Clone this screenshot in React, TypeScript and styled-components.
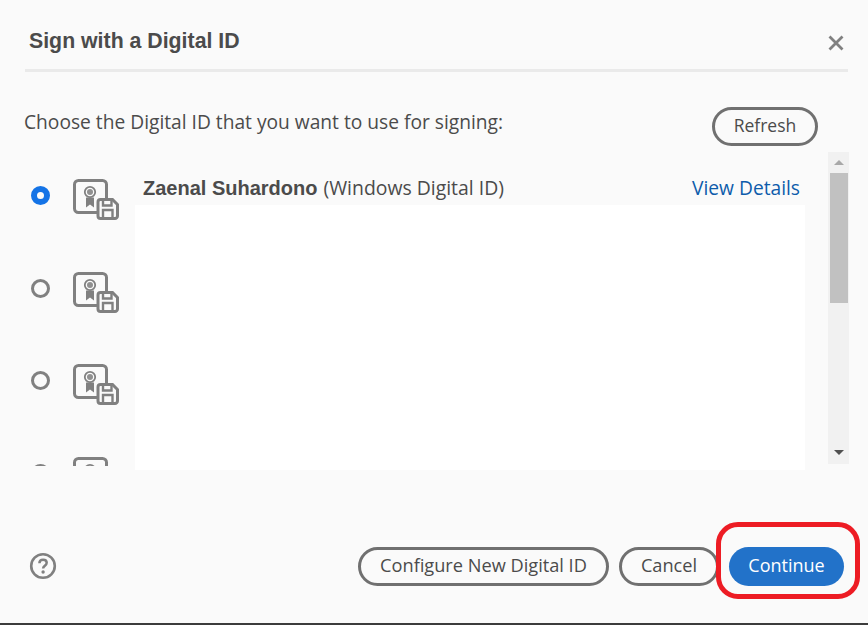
import React from 'react';
import styled, { createGlobalStyle } from 'styled-components';

const ids = [true, false, false, false];

const GlobalStyle = createGlobalStyle`
  html, body {
    margin: 0;
    padding: 0;
    background: #fafafa;
  }
`;

const CertIcon = () => (
  <svg width="46" height="41" viewBox="0 0 46 41" fill="none">
    <rect x="1.5" y="1.5" width="32" height="32" rx="4" stroke="#808080" strokeWidth="3" />
    <circle cx="17" cy="13" r="5.2" stroke="#808080" strokeWidth="1.8" />
    <circle cx="17" cy="13" r="3" fill="#909090" />
    <path d="M13 18.5v10l4-3 4 3v-10z" fill="#808080" />
    <path
      d="M27.5 20.5h12l5 5v11.5a2.5 2.5 0 0 1-2.5 2.5H27.5A2.5 2.5 0 0 1 25 37V23a2.5 2.5 0 0 1 2.5-2.5z"
      fill="#fafafa"
      stroke="#808080"
      strokeWidth="3"
    />
    <path d="M30 21v5.5h8.500V21" stroke="#808080" strokeWidth="2.4" />
    <path d="M30 39v-8h9.500v8" stroke="#808080" strokeWidth="2.4" />
  </svg>
);

export default function App() {
  return (
    <Page>
      <GlobalStyle />
      <Header>
        <Title>Sign with a Digital ID</Title>
        <CloseIcon width="16" height="16" viewBox="0 0 16 16">
          <path d="M1.5 1.5l13 13M14.5 1.5l-13 13" stroke="#808080" strokeWidth="2.8" />
        </CloseIcon>
      </Header>
      <Intro>
        <IntroText>Choose the Digital ID that you want to use for signing:</IntroText>
        <PillButton $width={106} $fontSize={17.5}>Refresh</PillButton>
      </Intro>
      <ListArea>
        <IdList>
          {ids.map((selected, i) => (
            <IdRow key={i}>
              <Radio $selected={selected} />
              <CertIcon />
              {selected && (
                <IdInfo>
                  <IdName>Zaenal Suhardono</IdName>
                  <IdType>(Windows Digital ID)</IdType>
                  <ViewDetails>View Details</ViewDetails>
                </IdInfo>
              )}
            </IdRow>
          ))}
        </IdList>
        <Redaction />
        <Scrollbar>
          <ArrowUp />
          <Thumb />
          <ArrowDown />
        </Scrollbar>
      </ListArea>
      <Footer>
        <HelpIcon width="28" height="28" viewBox="0 0 28 28" fill="none">
          <circle cx="14" cy="14" r="11.8" stroke="#808080" strokeWidth="2.6" />
          <path
            d="M10.4 11.2c0-2.2 1.6-3.5 3.7-3.5s3.6 1.3 3.6 3.1c0 2.9-3.6 3-3.6 5.8"
            stroke="#808080"
            strokeWidth="2.5"
          />
          <circle cx="14.1" cy="20" r="1.7" fill="#808080" />
        </HelpIcon>
        <FooterButtons>
          <PillButton $width={251} $fontSize={18.2}>Configure New Digital ID</PillButton>
          <PillButton $width={100} $fontSize={18.2}>Cancel</PillButton>
          <PrimaryButton>Continue</PrimaryButton>
        </FooterButtons>
        <Annotation />
      </Footer>
      <BottomEdge />
    </Page>
  );
}

const Page = styled.div`
  width: 868px;
  height: 625px;
  box-sizing: border-box;
  display: flex;
  flex-flow: column;
  position: relative;
  overflow: hidden;
  background: #fafafa;
  font-family: 'Open Sans', 'Noto Sans', sans-serif;
  color: #4b4b4b;
`;

const Header = styled.div`
  height: 72px;
  box-sizing: border-box;
  margin: 0 20px 0 25px;
  padding: 26px 4px 0 4px;
  display: flex;
  justify-content: space-between;
  align-items: flex-start;
  border-bottom: 3px solid #eaeaea;
  flex: none;
`;

const Title = styled.h1`
  margin: 0;
  font-family: 'Liberation Sans', Arial, sans-serif;
  font-size: 21.3px;
  line-height: 30px;
  font-weight: bold;
  color: #4b4b4b;
`;

const CloseIcon = styled.svg`
  margin-top: 9px;
`;

const Intro = styled.div`
  height: 39px;
  margin: 35px 50px 0 24px;
  display: flex;
  justify-content: space-between;
  align-items: center;
  flex: none;
`;

const IntroText = styled.div`
  font-size: 19.2px;
  line-height: 30px;
  margin-top: -9px;
`;

const PillButton = styled.button<{ $width: number; $fontSize: number }>`
  width: ${props => props.$width}px;
  height: 39px;
  box-sizing: border-box;
  padding: 0 0 3px;
  flex: none;
  border: 3px solid #707070;
  border-radius: 20px;
  background: transparent;
  font-family: inherit;
  font-size: ${props => props.$fontSize}px;
  color: #4b4b4b;
`;

const ListArea = styled.div`
  height: 312px;
  margin: 6px 19px 0 0;
  display: flex;
  flex: none;
  position: relative;
`;

const IdList = styled.div`
  flex: 1;
  overflow: hidden;
  padding: 27px 0 0 31px;
  margin-bottom: -2px;
  display: flex;
  flex-flow: column;
  gap: 51.5px;
`;

const IdRow = styled.div`
  height: 41px;
  flex: none;
  display: flex;
  align-items: center;
  gap: 15px;
`;

const Radio = styled.span<{ $selected: boolean }>`
  width: 19px;
  height: 19px;
  flex: none;
  box-sizing: border-box;
  border-radius: 50%;
  background: #fafafa;
  border: ${props => (props.$selected ? '6px solid #1473e6' : '3px solid #808080')};
  margin-bottom: 8px;
  margin-right: 8px;
`;

const IdInfo = styled.div`
  width: 657px;
  margin: -24px 0 0 9px;
  display: flex;
  align-items: baseline;
`;

const IdName = styled.span`
  font-family: 'Liberation Sans', Arial, sans-serif;
  font-size: 20px;
  font-weight: bold;
`;

const IdType = styled.span`
  font-size: 19.4px;
  margin-left: 6px;
`;

const ViewDetails = styled.span`
  margin-left: auto;
  font-size: 19.2px;
  color: #0d5cab;
`;

// blanked-out region of the original capture
const Redaction = styled.div`
  position: absolute;
  left: 135px;
  top: 53px;
  width: 670px;
  height: 265px;
  background: #fff;
`;

const Scrollbar = styled.div`
  width: 21px;
  flex: none;
  background: #f1f1f1;
  display: flex;
  flex-flow: column;
  align-items: center;
`;

const ArrowUp = styled.span`
  margin-top: 8px;
  border: 5px solid transparent;
  border-top: 0;
  border-bottom: 5px solid #a8a8a8;
`;

const Thumb = styled.div`
  width: 18px;
  height: 130px;
  margin-top: 8px;
  background: #c1c1c1;
`;

const ArrowDown = styled.span`
  margin-top: auto;
  margin-bottom: 9px;
  border: 5px solid transparent;
  border-bottom: 0;
  border-top: 5px solid #505050;
`;

const Footer = styled.div`
  flex: 1;
  padding: 0 24px 39px 29px;
  display: flex;
  justify-content: space-between;
  align-items: flex-end;
  position: relative;
`;

const HelpIcon = styled.svg`
  margin-bottom: 6px;
`;

const FooterButtons = styled.div`
  display: flex;
  gap: 10px;
`;

const PrimaryButton = styled.button`
  width: 115px;
  height: 39px;
  padding: 0 0 3px;
  border: 0;
  border-radius: 20px;
  background: #2272c9;
  color: #fff;
  font-family: inherit;
  font-size: 18px;
`;

const Annotation = styled.div`
  position: absolute;
  right: 8px;
  bottom: 26px;
  width: 144px;
  height: 77px;
  box-sizing: border-box;
  border: 5px solid #ed1c24;
  border-radius: 22px;
`;

const BottomEdge = styled.div`
  position: absolute;
  left: 0;
  right: 0;
  bottom: 0;
  height: 2px;
  background: #3c3c3c;
`;
